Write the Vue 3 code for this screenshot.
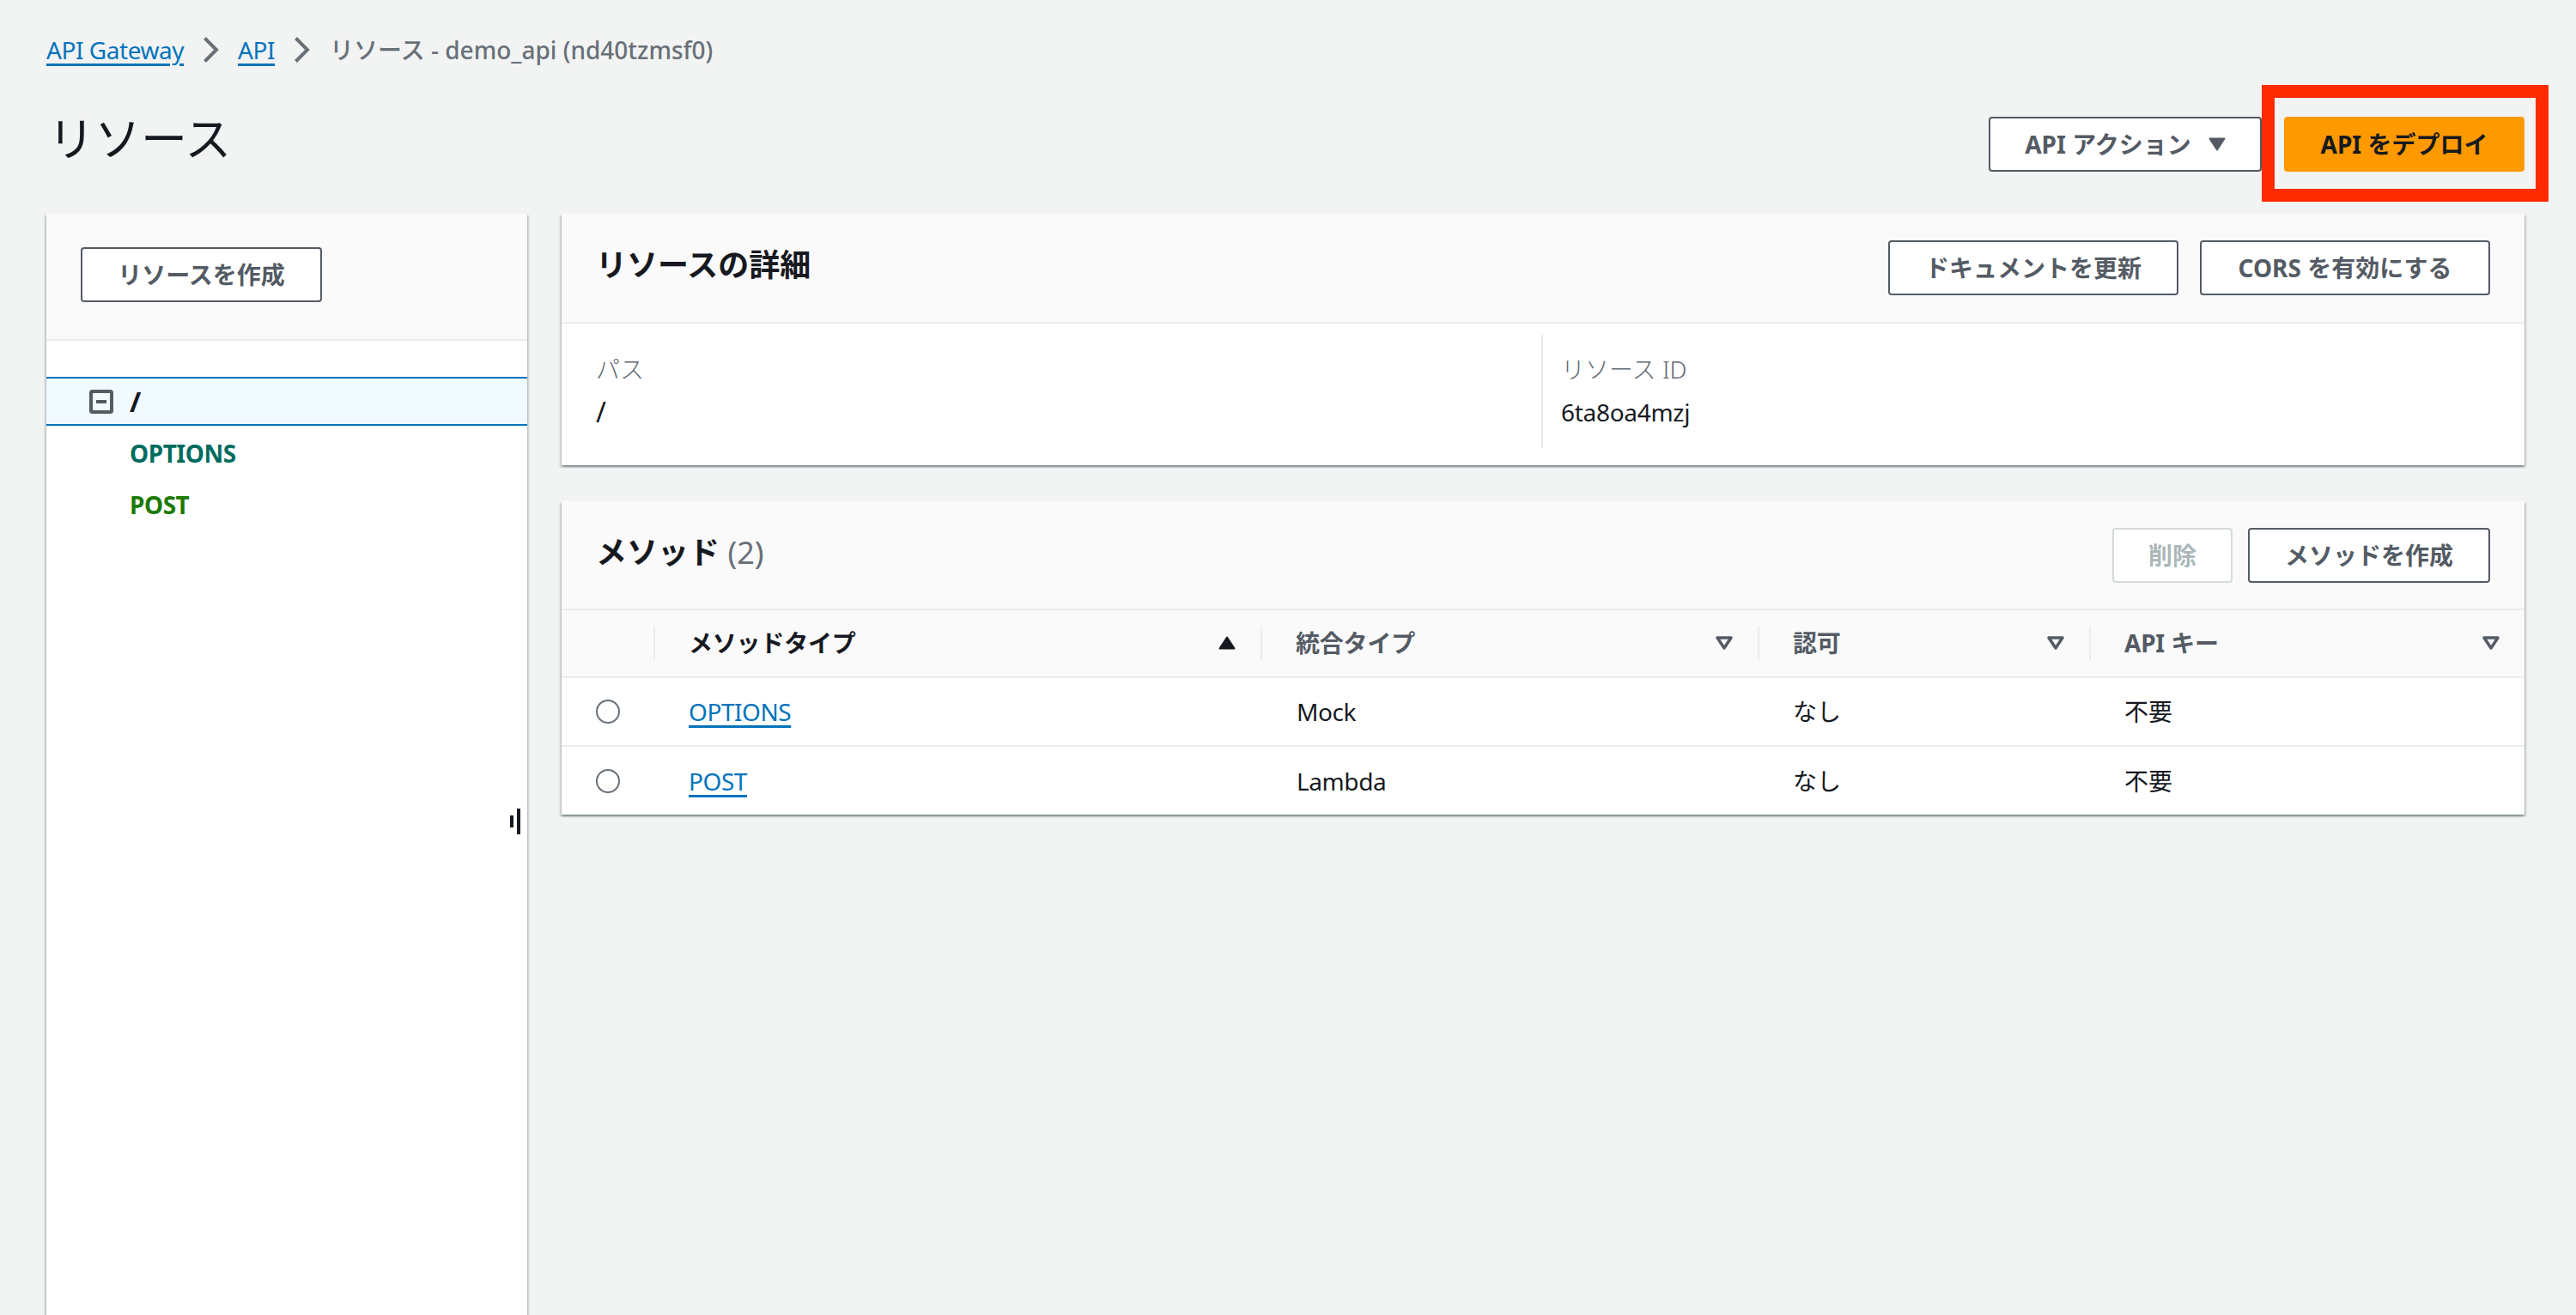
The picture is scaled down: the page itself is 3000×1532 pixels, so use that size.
<template>
  <div class="page">
    <!-- パンくず -->
    <nav class="crumbs">
      <a class="link">API Gateway</a>
      <svg class="crumb-sep" viewBox="0 0 19 30"><path d="M2.5 1.5 16 15 2.5 28.5" /></svg>
      <a class="link">API</a>
      <svg class="crumb-sep" viewBox="0 0 19 30"><path d="M2.5 1.5 16 15 2.5 28.5" /></svg>
      <span class="crumb-now">リソース - demo_api (nd40tzmsf0)</span>
    </nav>

    <!-- ページヘッダー -->
    <header class="page-head">
      <h1>リソース</h1>
      <div class="page-actions">
        <button class="btn btn-action">
          API アクション
          <svg class="caret" viewBox="0 0 20 16"><path d="M1.5 1.5h17L10 14.5z" /></svg>
        </button>
        <div class="deploy-wrap">
          <button class="btn btn-primary">API をデプロイ</button>
          <!-- 赤枠の注釈 -->
          <div class="annotation"></div>
        </div>
      </div>
    </header>

    <div class="columns">
      <!-- リソースツリー -->
      <aside class="tree-panel">
        <div class="tree-head">
          <button class="btn btn-create">リソースを作成</button>
        </div>
        <div class="tree-body">
          <div class="tree-root">
            <svg class="tree-toggle" viewBox="0 0 28 28">
              <rect x="2" y="2" width="24" height="24" rx="1.5" />
              <path d="M8 14h12" />
            </svg>
            <span class="slash">/</span>
          </div>
          <div class="tree-method options">OPTIONS</div>
          <div class="tree-method post">POST</div>
        </div>
        <div class="resizer"><i></i><i></i></div>
      </aside>

      <main class="content">
        <!-- リソースの詳細 -->
        <section class="card">
          <div class="card-head">
            <h2>リソースの詳細</h2>
            <div class="card-actions">
              <button class="btn btn-doc">ドキュメントを更新</button>
              <button class="btn btn-doc">CORS を有効にする</button>
            </div>
          </div>
          <div class="detail">
            <div class="detail-col">
              <div class="detail-label">パス</div>
              <div class="detail-value"><span class="slash">/</span></div>
            </div>
            <div class="detail-col detail-col-id">
              <div class="detail-label">リソース ID</div>
              <div class="detail-value">6ta8oa4mzj</div>
            </div>
          </div>
        </section>

        <!-- メソッド -->
        <section class="card">
          <div class="card-head methods-head">
            <h2>メソッド <span class="count">(2)</span></h2>
            <div class="card-actions tight">
              <button class="btn btn-disabled">削除</button>
              <button class="btn btn-method">メソッドを作成</button>
            </div>
          </div>
          <table class="methods">
            <colgroup>
              <col class="c0" /><col class="c1" /><col class="c2" /><col class="c3" /><col />
            </colgroup>
            <thead>
              <tr>
                <th></th>
                <th v-for="(col, i) in columns" :key="col" :class="{ active: i === 0 }">
                  <div class="th-inner">
                    <span>{{ col }}</span>
                    <svg v-if="i === 0" class="sort" viewBox="0 0 20 16"><path class="sort-up" d="M10 1.5 18.5 14.5h-17z" /></svg>
                    <svg v-else class="sort" viewBox="0 0 20 16"><path class="sort-down" d="M2 2h16L10 14z" /></svg>
                  </div>
                </th>
              </tr>
            </thead>
            <tbody>
              <tr v-for="row in rows" :key="row.name">
                <td><span class="radio"></span></td>
                <td><a class="link">{{ row.name }}</a></td>
                <td class="td-type">{{ row.type }}</td>
                <td>なし</td>
                <td>不要</td>
              </tr>
            </tbody>
          </table>
        </section>
      </main>
    </div>
  </div>
</template>

<script setup>
const columns = ['メソッドタイプ', '統合タイプ', '認可', 'API キー']
const rows = [
  { name: 'OPTIONS', type: 'Mock' },
  { name: 'POST', type: 'Lambda' }
]
</script>

<style>
html, body {
  margin: 0;
  background: #f2f3f3;
}
</style>

<style scoped>
* {
  box-sizing: border-box;
}

.page {
  height: 1532px;
  overflow: hidden;
  padding: 38px 60px 0 54px;
  background: #f2f3f3;
  color: #16191f;
  font-family: "Noto Sans", "Noto Sans CJK JP", sans-serif;
  font-size: 28px;
  line-height: 40px;
}

.link {
  color: #0073bb;
  text-decoration: underline;
  text-decoration-thickness: 3px;
  text-underline-offset: 5px;
  letter-spacing: -0.45px;
}

.slash {
  font-size: 32px;
  line-height: 40px;
}

/* パンくず */
.crumbs {
  display: flex;
  align-items: center;
  height: 40px;
}
.crumb-sep {
  width: 19px;
  height: 30px;
  margin: 0 22px;
  fill: none;
  stroke: #687078;
  stroke-width: 4;
}
.crumb-now {
  margin-left: 1px;
  color: #687078;
  font-weight: 500;
}

/* ヘッダー */
.page-head {
  display: flex;
  justify-content: space-between;
  margin-top: 58px;
  height: 113px;
}
.page-head h1 {
  margin: -7px 0 0 2px;
  font-size: 54px;
  font-weight: 400;
  line-height: 64px;
}
.page-actions {
  display: flex;
}

.btn {
  height: 64px;
  padding: 0;
  border: 2px solid #545b64;
  border-radius: 4px;
  background: #fff;
  color: #545b64;
  font: inherit;
  font-weight: 700;
  line-height: 1;
}
.btn-action {
  width: 318px;
  display: flex;
  align-items: center;
  justify-content: center;
  gap: 20px;
}
.caret {
  width: 20px;
  height: 16px;
  fill: #545b64;
  stroke: #545b64;
  stroke-linejoin: round;
  stroke-width: 2;
}
.deploy-wrap {
  position: relative;
  margin-left: 26px;
}
.btn-primary {
  width: 280px;
  display: block;
  border: none;
  background: #ff9900;
  color: #16191f;
}
.annotation {
  position: absolute;
  left: -26px;
  top: -37px;
  width: 334px;
  height: 136px;
  border: 15px solid #ff2a00;
  pointer-events: none;
}

.columns {
  display: flex;
  gap: 40px;
}

/* ツリー */
.tree-panel {
  position: relative;
  flex: 0 0 560px;
  height: 1300px;
  background: #fff;
  box-shadow: 0 2px 2px 0 rgba(0, 28, 36, 0.3), 2px 2px 2px 0 rgba(0, 28, 36, 0.15), -2px 2px 2px 0 rgba(0, 28, 36, 0.15);
}
.tree-head {
  height: 148px;
  padding: 39px 0 0 40px;
  background: #fafafa;
  border-bottom: 2px solid #eaeded;
}
.btn-create {
  width: 281px;
}
.tree-body {
  padding-top: 42px;
}
.tree-root {
  display: flex;
  align-items: center;
  height: 57px;
  padding-left: 50px;
  background: #f1faff;
  border-top: 2px solid #0073bb;
  border-bottom: 2px solid #0073bb;
  font-weight: 700;
}
.tree-toggle {
  width: 28px;
  height: 28px;
  margin-right: 19px;
  fill: none;
  stroke: #545b64;
  stroke-width: 4;
}
.tree-method {
  padding-left: 97px;
  margin-top: 20px;
  height: 40px;
  font-weight: 700;
  letter-spacing: -0.45px;
}
.tree-method.options {
  color: #006b5e;
  margin-top: 12px;
}
.tree-method.post {
  color: #1b7a00;
}
.resizer {
  position: absolute;
  left: 540px;
  top: 693px;
  height: 30px;
  display: flex;
  align-items: center;
  gap: 4px;
}
.resizer i {
  display: block;
  width: 4px;
  height: 14px;
  background: #16191f;
}
.resizer i + i {
  height: 30px;
}

/* 右カラム */
.content {
  flex: 1;
  min-width: 0;
  display: flex;
  flex-direction: column;
  gap: 42px;
}
.card {
  background: #fff;
  box-shadow: 0 2px 2px 0 rgba(0, 28, 36, 0.3), 2px 2px 2px 0 rgba(0, 28, 36, 0.15), -2px 2px 2px 0 rgba(0, 28, 36, 0.15);
}
.card-head {
  height: 128px;
  display: flex;
  align-items: center;
  justify-content: space-between;
  padding: 0 40px 0 40px;
  background: #fafafa;
  border-bottom: 2px solid #eaeded;
}
.card-head h2 {
  margin: 0 0 6px;
  font-size: 36px;
  font-weight: 700;
  line-height: 48px;
}
.count {
  color: #687078;
  font-weight: 400;
}
.card-actions {
  display: flex;
  gap: 25px;
}
.card-actions.tight {
  gap: 18px;
}
.btn-doc {
  width: 338px;
}
.btn-disabled {
  width: 140px;
  border-color: #d5dbdb;
  color: #aab7b8;
}
.btn-method {
  width: 282px;
}
.methods-head {
  height: 127px;
}

.detail {
  display: flex;
  height: 165px;
  padding-top: 13px;
}
.detail-col {
  width: 1141px;
  padding: 20px 40px 0;
}
.detail-col-id {
  width: auto;
  height: 132px;
  padding-left: 21px;
  border-left: 2px solid #eaeded;
}
.detail-label {
  color: #5f6872;
  font-weight: 300;
  line-height: 40px;
}
.detail-value {
  margin-top: 10px;
  line-height: 40px;
  letter-spacing: -0.3px;
}

/* メソッド表 */
.methods {
  width: 100%;
  border-collapse: collapse;
  table-layout: fixed;
}
.c0 { width: 107px; }
.c1 { width: 707px; }
.c2 { width: 579px; }
.c3 { width: 386px; }

.methods th {
  height: 78px;
  padding: 0 0 2px;
  text-align: left;
  color: #545b64;
  font-weight: 700;
  letter-spacing: -0.2px;
  background: #fafafa;
  border-bottom: 2px solid #eaeded;
}
.methods th.active {
  color: #16191f;
}
.th-inner {
  height: 40px;
  display: flex;
  align-items: center;
  justify-content: space-between;
  padding: 0 29px 0 39px;
  border-left: 2px solid #eaeded;
}
.methods th:first-child .th-inner {
  border-left: none;
}
.sort {
  width: 20px;
  height: 16px;
  flex-shrink: 0;
}
.sort-up {
  fill: #16191f;
  stroke: #16191f;
  stroke-linejoin: round;
  stroke-width: 2;
}
.sort-down {
  fill: none;
  stroke: #545b64;
  stroke-linejoin: round;
  stroke-width: 3.5;
}
.methods td {
  height: 80px;
  padding: 0 0 0 41px;
  border-bottom: 2px solid #eaeded;
}
.methods td.td-type {
  padding-left: 42px;
  letter-spacing: -0.4px;
}
.methods tbody tr:last-child td {
  border-bottom: none;
}
.methods td:first-child {
  padding-left: 40px;
}
.radio {
  display: block;
  width: 28px;
  height: 28px;
  border: 2px solid #687078;
  border-radius: 50%;
  background: #fff;
}
</style>
